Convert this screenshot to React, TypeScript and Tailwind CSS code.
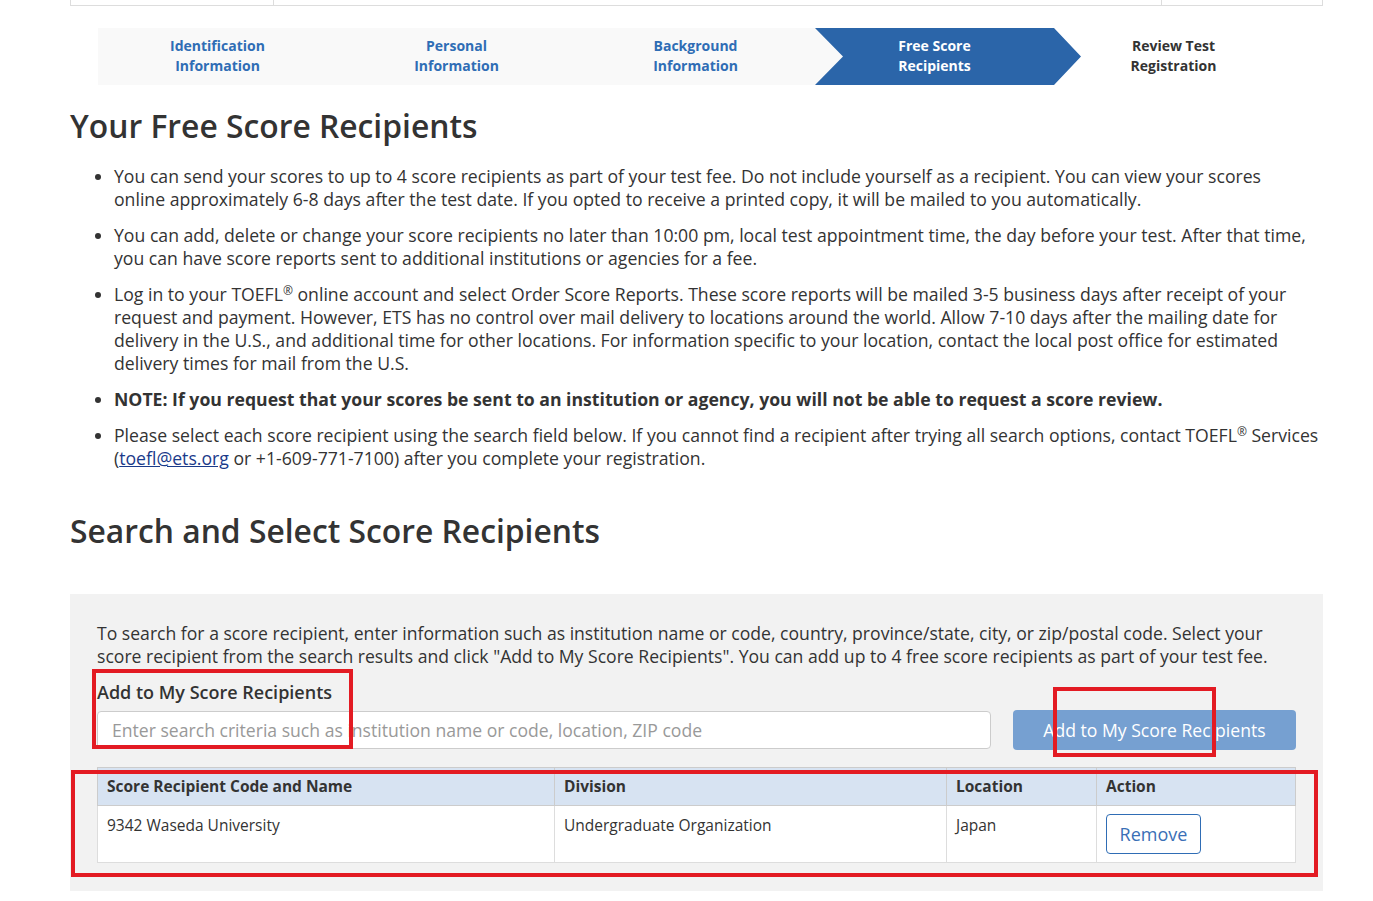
import React from 'react';

const steps = [
  { label: ['Identification', 'Information'], state: 'done' },
  { label: ['Personal', 'Information'], state: 'done' },
  { label: ['Background', 'Information'], state: 'done' },
  { label: ['Free Score', 'Recipients'], state: 'active' },
  { label: ['Review Test', 'Registration'], state: 'todo' },
];

export default function App() {
  return (
    <div className="relative min-h-[901px] w-[1373px] bg-white text-[#333] font-['Open_Sans',sans-serif]">
      <div className="ml-[70px] w-[1253px]">
        {/* cut-off box at the top */}
        <div className="grid h-[6px] grid-cols-[203px_888px_1fr] border-x border-b border-[#ddd]">
          <div className="border-r border-[#ddd]" />
          <div className="border-r border-[#ddd]" />
          <div />
        </div>

        {/* Stepper */}
        <div className="ml-[28px] mt-[22px] flex h-[57px]">
          {steps.map((s) => (
            <div
              key={s.label[0]}
              className={`relative flex w-[239px] flex-col items-center justify-center pb-[1px] text-[14px] font-bold leading-[20px] ${
                s.state === 'done' || s.state === 'active' ? 'bg-[#f9f9f9]' : ''
              } ${s.state === 'done' ? 'text-[#2f6db5]' : s.state === 'active' ? 'text-white' : 'text-[#333]'}`}
            >
              {s.state === 'active' && (
                <svg className="absolute left-0 top-0 h-[57px] w-[266px]" viewBox="0 0 266 57">
                  <polygon points="0,0 239,0 266,28.5 239,57 0,57 28,28.5" fill="#2b65a9" />
                </svg>
              )}
              <span className="relative">{s.label[0]}</span>
              <span className="relative">{s.label[1]}</span>
            </div>
          ))}
        </div>

        <h1 className="mt-[21px] text-[31.8px] font-semibold leading-[40px]">Your Free Score Recipients</h1>

        <ul className="mt-[19px] list-disc pl-[44px] text-[17.65px] leading-[23px]">
          <li className="mb-[13px] pr-[50px]">
            You can send your scores to up to 4 score recipients as part of your test fee. Do not include yourself as a
            recipient. You can view your scores online approximately 6-8 days after the test date. If you opted to
            receive a printed copy, it will be mailed to you automatically.
          </li>
          <li className="mb-[13px]">
            You can add, delete or change your score recipients no later than 10:00 pm, local test appointment time, the
            day before your test. After that time, you can have score reports sent to additional institutions or agencies
            for a fee.
          </li>
          <li className="mb-[13px]">
            Log in to your TOEFL<sup className="text-[12px]">®</sup> online account and select Order Score Reports.
            These score reports will be mailed 3-5 business days after receipt of your request and payment. However, ETS
            has no control over mail delivery to locations around the world. Allow 7-10 days after the mailing date for
            delivery in the U.S., and additional time for other locations. For information specific to your location,
            contact the local post office for estimated delivery times for mail from the U.S.
          </li>
          <li className="mb-[13px] font-bold">
            NOTE: If you request that your scores be sent to an institution or agency, you will not be able to request a
            score review.
          </li>
          <li>
            Please select each score recipient using the search field below. If you cannot find a recipient after trying
            all search options, contact TOEFL<sup className="text-[12px]">®</sup> Services (
            <a href="#" className="text-[#1a3a8a] underline">toefl@ets.org</a> or +1-609-771-7100) after you complete
            your registration.
          </li>
        </ul>

        <h2 className="mt-[41px] text-[31.8px] font-semibold leading-[40px]">Search and Select Score Recipients</h2>

        {/* Search panel */}
        <div className="mt-[43px] bg-[#f2f2f2] px-[27px] pb-[28px] pt-[28px]">
          <p className="text-[17.6px] leading-[23px]">
            To search for a score recipient, enter information such as institution name or code, country,
            province/state, city, or zip/postal code. Select your score recipient from the search results and click "Add
            to My Score Recipients". You can add up to 4 free score recipients as part of your test fee.
          </p>
          <div className="mt-[13px] text-[18px] font-semibold leading-[23px]">Add to My Score Recipients</div>
          <div className="mt-[6px] flex items-center gap-[22px]">
            <div className="flex h-[38px] w-[894px] items-center rounded-[4px] border border-[#ccc] bg-white px-[14px] text-[17.6px] text-[#999]">
              Enter search criteria such as institution name or code, location, ZIP code
            </div>
            <button className="h-[40px] w-[283px] rounded-[4px] bg-[#76a0d1] text-[17.6px] text-white">
              Add to My Score Recipients
            </button>
          </div>

          <table className="mt-[17px] w-[1199px] border-collapse text-[15.5px]">
            <thead>
              <tr className="bg-[#d7e3f2]">
                <th className="h-[38px] w-[457px] border border-[#ccc] px-[9px] text-left font-bold">Score Recipient Code and Name</th>
                <th className="w-[392px] border border-[#ccc] px-[9px] text-left font-bold">Division</th>
                <th className="w-[150px] border border-[#ccc] px-[9px] text-left font-bold">Location</th>
                <th className="border border-[#ccc] px-[9px] text-left font-bold">Action</th>
              </tr>
            </thead>
            <tbody>
              <tr className="bg-white">
                <td className="h-[57px] border border-[#ddd] px-[9px] pt-[8px] align-top">9342 Waseda University</td>
                <td className="border border-[#ddd] px-[9px] pt-[8px] align-top">Undergraduate Organization</td>
                <td className="border border-[#ddd] px-[9px] pt-[8px] align-top">Japan</td>
                <td className="border border-[#ddd] px-[9px] pt-[8px] pb-[7px] align-top">
                  <button className="h-[40px] w-[95px] rounded-[4px] border border-[#2f6db5] text-[18px] text-[#3a6fb6]">
                    Remove
                  </button>
                </td>
              </tr>
            </tbody>
          </table>
        </div>
      </div>

      {/* red annotation boxes */}
      <div className="pointer-events-none absolute left-[92px] top-[669px] h-[80px] w-[261px] border-4 border-[#e31b23]" />
      <div className="pointer-events-none absolute left-[1053px] top-[687px] h-[70px] w-[163px] border-4 border-[#e31b23]" />
      <div className="pointer-events-none absolute left-[71px] top-[770px] h-[107px] w-[1247px] border-4 border-[#e31b23]" />
    </div>
  );
}
